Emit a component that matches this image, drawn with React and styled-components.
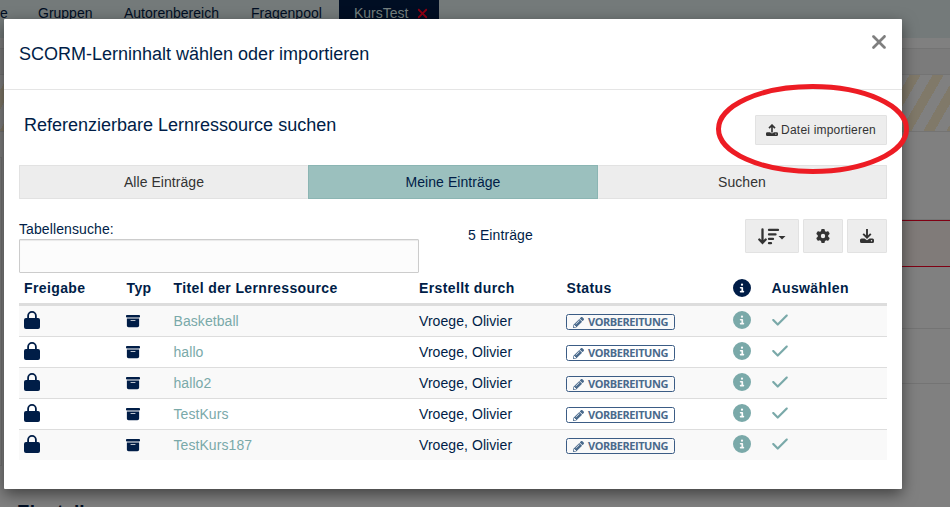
import React from 'react';
import styled, { createGlobalStyle } from 'styled-components';
import { FaBoxArchive, FaCircleInfo, FaCheck, FaGear, FaXmark } from 'react-icons/fa6';
import { FaPencilAlt } from 'react-icons/fa';

const Global = createGlobalStyle`
  * { box-sizing: border-box; }
  body { margin: 0; overflow: hidden; font-family: "Liberation Sans", Arial, sans-serif; font-size: 14px; color: #001d47; }
  svg { display: block; flex: none; }
`;

const Page = styled.div`
  position: relative;
  width: 950px;
  height: 507px;
  overflow: hidden;
  background: #808080;
`;
const NavBar = styled.nav`
  display: flex;
  height: 38px;
  background: #747a7a;
`;
const NavItem = styled.div`
  display: flex;
  align-items: center;
  padding-left: ${(p) => p.$gap}px;
  width: ${(p) => p.$w}px;
  height: ${(p) => (p.$active ? 38 : 26)}px;
  padding-bottom: ${(p) => (p.$active ? 12 : 0)}px;
  white-space: nowrap;
  color: ${(p) => (p.$active ? '#75807f' : '#000e23')};
  background: ${(p) => (p.$active ? '#000e23' : 'transparent')};
  svg { margin-left: 7px; color: #8c0014; }
`;
const Spacer = styled.div`
  height: ${(p) => p.$h}px;
  border-bottom: 1px solid #747474;
  background: ${(p) => p.$bg || '#808080'};
`;
const Stripes = styled.div`
  height: 57px;
  border-bottom: 1px solid #747474;
  background: repeating-linear-gradient(120deg, #808080 0 7.6px, #807969 7.6px 17.2px, #808080 17.2px 20px);
`;
const Lower = styled.div`
  display: grid;
  grid-template-columns: 2px 1fr;
  column-gap: 3px;
`;
const SideMenu = styled.div`
  height: 309px;
  margin-top: 25px;
  border: solid #747474;
  border-width: 1px 1px 1px 0;
`;
const WarningBand = styled.div`
  height: 47px;
  border: solid #800013;
  border-width: 1px 0;
  background: #807b79;
`;
const SettingsTitle = styled.h2`
  margin: 116px 0 0 12px;
  font-size: 19px;
  line-height: 24px;
  color: #000e23;
`;

const Modal = styled.section`
  position: absolute;
  left: 4px;
  top: 19px;
  width: 898px;
  height: 470px;
  border-radius: 1px;
  background: #fff;
  box-shadow: 0 5px 15px rgba(0, 0, 0, 0.5);
`;
const ModalHeader = styled.header`
  display: flex;
  justify-content: space-between;
  height: 71px;
  padding: 24px 12px 0 15px;
  border-bottom: 1px solid #e5e5e5;
`;
const Title = styled.h1`
  margin: ${(p) => p.$lift || 0}px 0 0;
  font-size: 18px;
  font-weight: 400;
  line-height: 22px;
`;
const CloseButton = styled.button`
  display: flex;
  align-items: flex-start;
  height: 22px;
  margin-top: -12px;
  padding: 0;
  border: 0;
  background: none;
  color: #7f7f7f;
`;
const Body = styled.div`
  padding: 25px 15px 0;
`;
const SearchHead = styled.div`
  display: flex;
  justify-content: space-between;
  height: 50px;
  padding-left: 5px;
`;
const Button = styled.button`
  display: flex;
  align-items: center;
  justify-content: center;
  gap: ${(p) => p.$gap || 0}px;
  width: ${(p) => p.$w}px;
  height: ${(p) => p.$h}px;
  padding: 0;
  border: 1px solid #e2e2e2;
  border-radius: 1px;
  background: #ededed;
  color: #333;
  font: 12px "Liberation Sans", Arial, sans-serif;
  letter-spacing: 0.2px;
  white-space: nowrap;
`;
const Segments = styled.div`
  display: grid;
  grid-template-columns: 289px 290px 289px;
  height: 34px;
`;
const Segment = styled.button`
  border: 1px solid ${(p) => (p.$active ? '#8bb5b3' : '#e2e2e2')};
  border-left-width: ${(p) => (p.$last ? 0 : 1)}px;
  border-right-width: ${(p) => (p.$first ? 0 : 1)}px;
  border-radius: ${(p) => (p.$active ? 0 : 1)}px;
  background: ${(p) => (p.$active ? '#9bc0be' : '#ededed')};
  color: ${(p) => (p.$active ? '#001d47' : '#333')};
  font: 14px "Liberation Sans", Arial, sans-serif;
  letter-spacing: 0.05px;
  padding: 0;
`;
const Toolbar = styled.div`
  display: flex;
  height: 74px;
  padding-top: 20px;
  letter-spacing: 0.1px;
`;
const SearchField = styled.label`
  width: 400px;
  line-height: 20px;
`;
const SearchInput = styled.input`
  display: block;
  width: 400px;
  height: 34px;
  border: 1px solid #ccc;
  border-radius: 1px;
  background: #fcfcfc;
  box-shadow: inset 0 1px 1px rgba(0, 0, 0, 0.075);
`;
const Count = styled.div`
  flex: 1;
  padding: 6px 0 0 49px;
  line-height: 20px;
`;
const Actions = styled.div`
  display: flex;
  gap: 4px;
`;
const Row = styled.div`
  display: grid;
  grid-template-columns: 102px 47.5px 245.5px 147px 167px 38px 1fr;
  align-items: center;
  height: ${(p) => (p.$last ? 30 : 31)}px;
  padding-left: 5px;
  border-bottom: ${(p) => (p.$last ? 0 : 1)}px solid #ddd;
  background: ${(p) => (p.$odd ? '#f9f9f9' : '#fff')};
  letter-spacing: 0.07px;
  white-space: nowrap;
`;
const HeadRow = styled(Row)`
  grid-template-columns: 102.5px 47px 245.5px 147.5px 166.5px 38.5px 1fr;
  height: 33px;
  border-bottom: 3px solid #ddd;
  font-weight: 700;
  letter-spacing: 0.38px;
`;
const Link = styled.a`
  color: #7aa9a9;
`;
const AccentIcon = styled.span`
  color: #7aa9a9;
  margin: -2px 0 0 ${(p) => p.$nudge || 0}px;
`;
const StatusBadge = styled.span`
  display: flex;
  align-items: center;
  gap: 4px;
  width: 109px;
  height: 16px;
  margin-top: 2px;
  padding-left: 6px;
  border: 1px solid #3b5c85;
  border-radius: 2.5px;
  color: #4a6a8c;
  font-family: "Open Sans", "Noto Sans", sans-serif;
  font-size: 11px;
  font-weight: 700;
  line-height: 14px;
  letter-spacing: -0.45px;
`;
const Highlight = styled.svg`
  position: absolute;
  left: 714px;
  top: 82px;
`;

const LockIcon = () => (
  <svg width="16" height="20" viewBox="0 0 16 20">
    <path d="M4.1 8V4.8a3.9 3.9 0 0 1 7.8 0V8" fill="none" stroke="#001d47" strokeWidth="1.8" />
    <rect y="7" width="16" height="11" rx="2" fill="#001d47" />
  </svg>
);
const TrayIcon = ({ up, size }) => (
  <svg width={size} height={size} viewBox="0 0 14 14" fill="none" stroke="currentColor" strokeWidth="1.9">
    <path d={up ? 'M7 10V1.4M3.5 4.8 7 1.3l3.500 3.500' : 'M7 0v8.6M3.2 4.9 7 8.7l3.8-3.8'} />
    <path fill="currentColor" stroke="none" fillRule="evenodd" d="M1.5 9.5h3L7 11.2l2.5-1.7h3A1.5 1.5 0 0 1 14 11v1.500a1.5 1.5 0 0 1-1.5 1.5h-11A1.5 1.5 0 0 1 0 12.500V11a1.5 1.5 0 0 1 1.5-1.5Zm10 1.500a.7.7 0 1 0 0 1.400.7.7 0 0 0 0-1.400Z" />
  </svg>
);
const SortIcon = () => (
  <svg width="28" height="17" viewBox="0 0 28 17" fill="none" stroke="currentColor" strokeWidth="2.300" strokeLinecap="round">
    <path d="M4.500 1.500v13M1.300 11.500l3.200 3.400 3.200-3.400" />
    <path d="M11 1.900h9M11 6.400h6.500M11 10.900h4M11 15.200h2" />
    <path d="M20.500 8h7L24 11.500Z" fill="currentColor" stroke="none" />
  </svg>
);

const titles = ['Basketball', 'hallo', 'hallo2', 'TestKurs', 'TestKurs187'];

export default function App() {
  return (
    <Page>
      <Global />
      <NavBar>
        <NavItem $w={38}>e</NavItem>
        <NavItem $w={86}>Gruppen</NavItem>
        <NavItem $w={127}>Autorenbereich</NavItem>
        <NavItem $w={88}>Fragenpool</NavItem>
        <NavItem $w={100} $gap={15} $active>KursTest<FaXmark size={15} /></NavItem>
      </NavBar>
      <Spacer $h={11} />
      <Spacer $h={26} $bg="#7b7b7b" />
      <Stripes />
      <Lower>
        <SideMenu />
        <div>
          <Spacer $h={88} />
          <WarningBand />
          <Spacer $h={62} />
          <Spacer $h={55} />
          <SettingsTitle>Einstellungen</SettingsTitle>
        </div>
      </Lower>

      <Modal>
        <ModalHeader>
          <Title>SCORM-Lerninhalt wählen oder importieren</Title>
          <CloseButton aria-label="Schließen"><FaXmark size={22} /></CloseButton>
        </ModalHeader>
        <Body>
          <SearchHead>
            <Title as="h2" $lift={-1}>Referenzierbare Lernressource suchen</Title>
            <Button $w={132} $h={30} $gap={3}><TrayIcon up size={12} />Datei importieren</Button>
          </SearchHead>
          <Segments>
            <Segment $first>Alle Einträge</Segment>
            <Segment $active>Meine Einträge</Segment>
            <Segment $last>Suchen</Segment>
          </Segments>
          <Toolbar>
            <SearchField>Tabellensuche:<SearchInput /></SearchField>
            <Count>5 Einträge</Count>
            <Actions>
              <Button $w={54} $h={34}><SortIcon /></Button>
              <Button $w={40} $h={34}><FaGear size={14} /></Button>
              <Button $w={40} $h={34}><TrayIcon size={14} /></Button>
            </Actions>
          </Toolbar>
          <HeadRow>
            <span>Freigabe</span><span>Typ</span><span>Titel der Lernressource</span>
            <span>Erstellt durch</span><span>Status</span><FaCircleInfo size={18} /><span>Auswählen</span>
          </HeadRow>
          {titles.map((t, i) => (
            <Row key={t} $odd={i % 2 === 0} $last={i === titles.length - 1}>
              <LockIcon />
              <FaBoxArchive size={14} />
              <Link>{t}</Link>
              <span>Vroege, Olivier</span>
              <StatusBadge><FaPencilAlt size={11} />VORBEREITUNG</StatusBadge>
              <AccentIcon><FaCircleInfo size={18} /></AccentIcon>
              <AccentIcon $nudge={-0.5}><FaCheck size={18} /></AccentIcon>
            </Row>
          ))}
        </Body>
      </Modal>
      <Highlight width="198" height="94" viewBox="0 0 198 94">
        <ellipse cx="98.500" cy="47" rx="94" ry="42.500" fill="none" stroke="#ed1c24" strokeWidth="5" />
      </Highlight>
    </Page>
  );
}
